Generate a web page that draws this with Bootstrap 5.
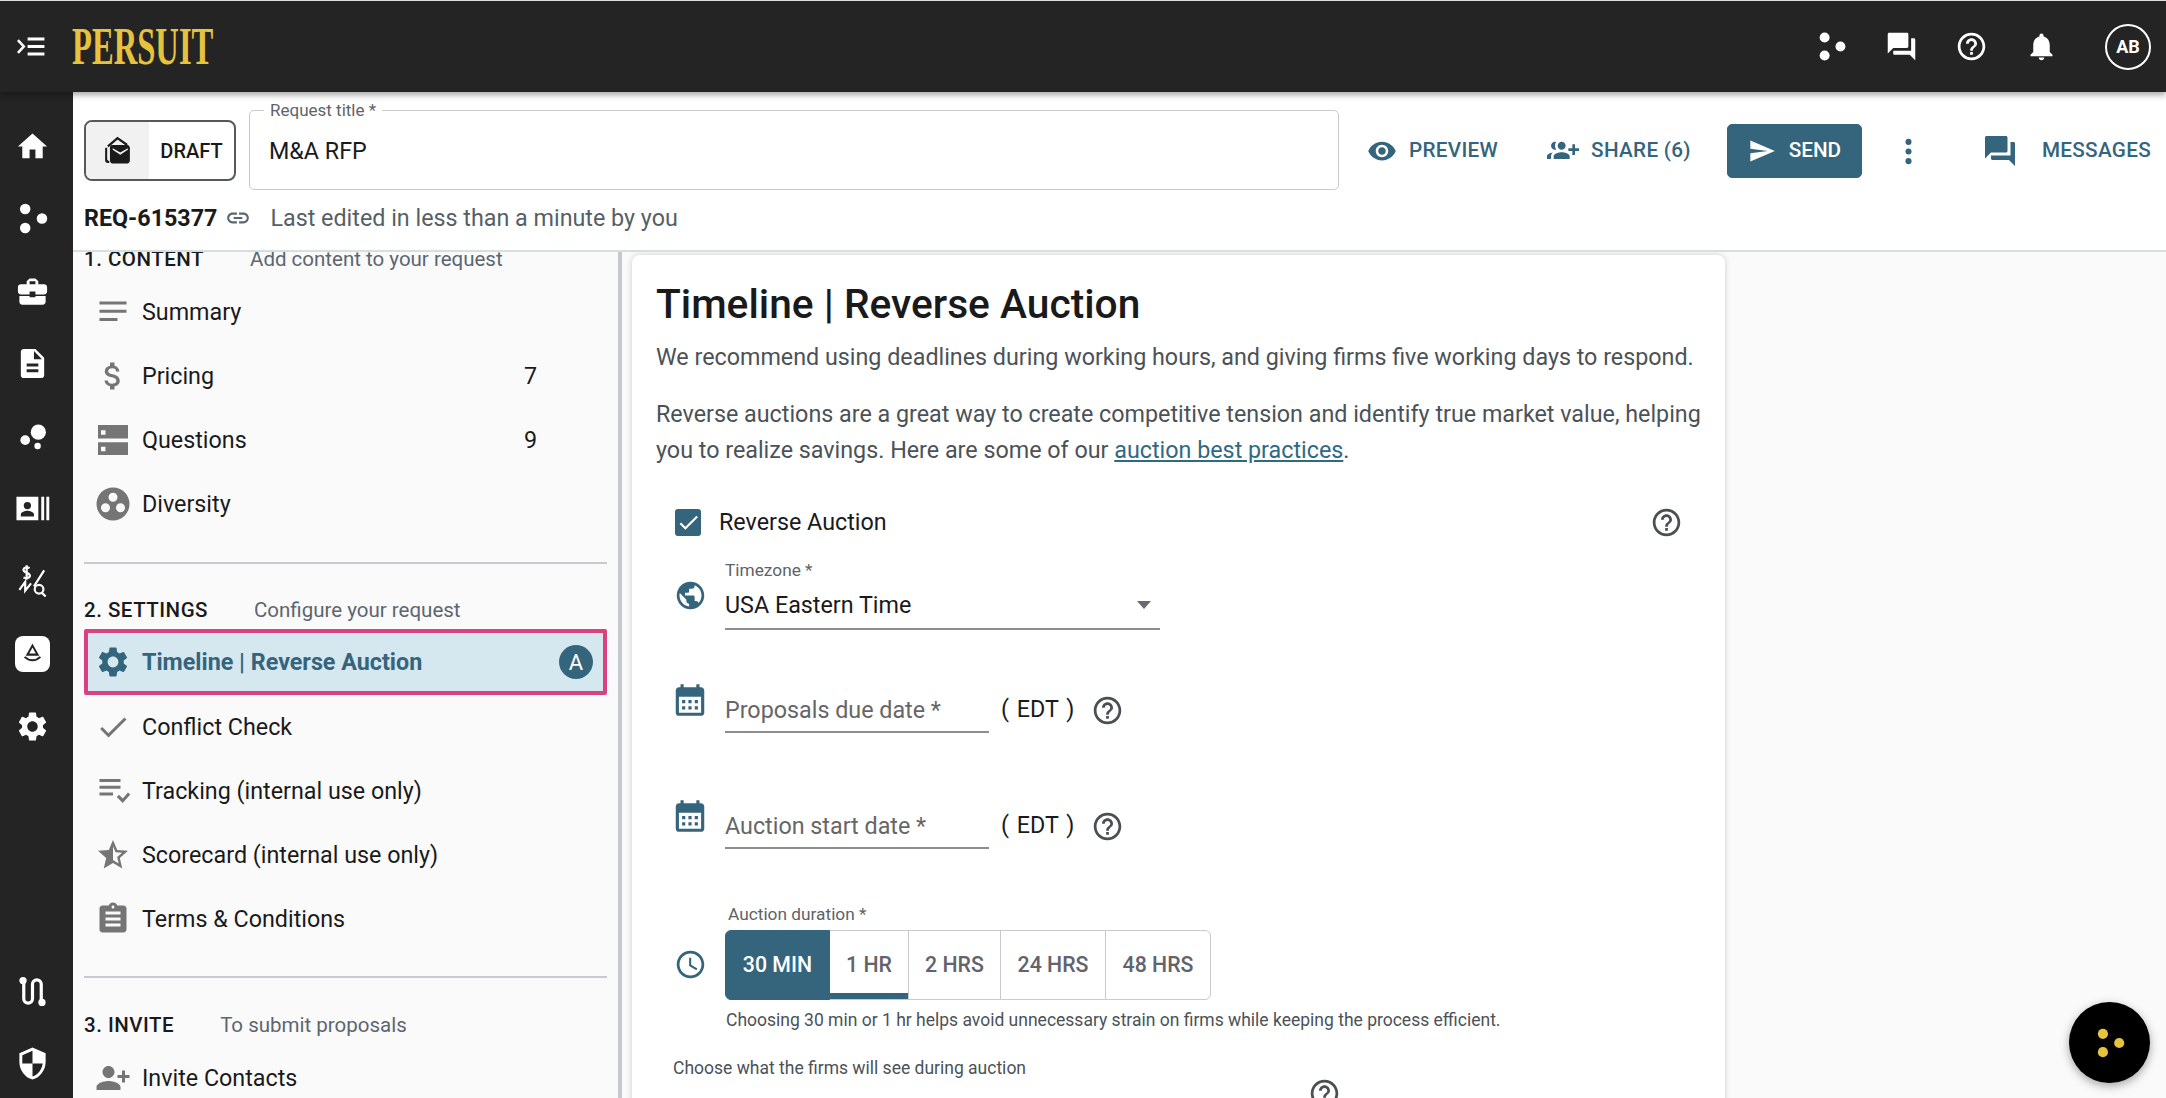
<!DOCTYPE html>
<html lang="en">
<head>
    <meta charset="UTF-8">
    <meta name="viewport" content="width=device-width, initial-scale=1.0">
    <title>Persuit - M&amp;A RFP</title>
    <link href="https://cdn.jsdelivr.net/npm/bootstrap@5.3.0/dist/css/bootstrap.min.css" rel="stylesheet">
    <style>
        body {
            font-family: Roboto, "Liberation Sans", sans-serif;
            font-size: 23.3px;
            color: #1a1a1a;
            background: #fafafa;
        }

        .ico { width: 33px; height: 33px; fill: currentColor; flex: none; }

        /* top bar */
        .top-bar { height: 92px; background: #242424; color: #fff; padding: 0; border-top: 1px solid #ddd; flex: none; position: relative; z-index: 3; box-shadow: 0 3px 6px rgba(0,0,0,.35); }
        .menu-btn { width: 72px; padding-left: 16px; }
        .menu-ico { width: 31px; height: 31px; }
        .logo-text { font-family: "Liberation Serif", serif; font-weight: 700; font-size: 52px; line-height: 1; color: #e5c33f; display: inline-block; transform: scaleX(.627); transform-origin: left center; width: 141px; }
        .top-icons { padding-right: 15px; gap: 37px; }
        .avatar { width: 46px; height: 46px; border: 2px solid #fff; border-radius: 50%; font-size: 18px; font-weight: 700; margin-left: 10px; }

        /* left rail */
        .side-rail { width: 73px; background: #242424; color: #fff; flex: none; padding: 37px 9px 17px 0; gap: 37.4px; }
        .side-rail .ico { width: 35px; height: 35px; }
        .side-rail .rail-tile { width: 35px; height: 36px; background: #fff; color: #242424; border-radius: 8px; }
        .side-rail .rail-tile .ico { width: 27px; height: 27px; }

        /* request header */
        .req-head { height: 160px; background: #fff; border-bottom: 2px solid #d5dfdd; flex: none; padding: 16px 11px 0; }
        .draft-box { width: 152px; height: 61px; border: 2px solid #55595e; border-radius: 8px; overflow: hidden; margin-top: 12px; font-size: 20px; font-weight: 500; }
        .draft-icon { width: 63px; background: #f1f1f1; }
        .title-field { width: 1090px; height: 89px; margin: -7px 0 0 13px; border: 1px solid #c9c9c9; border-radius: 5px; padding: 0 19px; }
        .title-field legend { float: none; width: auto; font-size: 17px; line-height: 18px; color: #5f6368; padding: 0 6px; margin: 0 0 15px -5px; }
        .action-bar { height: 86px; }
        .action-link { color: #34657c; font-size: 20.7px; font-weight: 500; letter-spacing: .3px; gap: 12px; }
        .send-btn { --bs-btn-bg: #34657c; --bs-btn-border-color: #34657c; --bs-btn-hover-bg: #34657c; width: 135px; height: 54px; font-size: 20.7px; font-weight: 500; gap: 13px; border-radius: 5px; padding: 0; }
        .req-meta { margin-top: 11px; line-height: 26px; }
        .req-number { font-weight: 700; font-size: 23.3px; }
        .req-note { color: #555f66; margin-left: 19px; }

        /* content nav */
        .nav-panel { width: 549px; flex: none; border-right: 4px solid #c6c8cd; padding: 0 11px; background: #fafafa; overflow: hidden; }
        .nav-step { font-size: 20.5px; line-height: 24px; display: flex; }
        .nav-step b { font-weight: 500; letter-spacing: .5px; margin-right: 46px; color: #1a1a1a; }
        .nav-step span { color: #5c6670; }
        .nav-step-first { margin-top: -5px; }
        .nav-list { --bs-list-group-bg: transparent; --bs-list-group-border-width: 0; --bs-list-group-item-padding-x: 11px; --bs-list-group-item-padding-y: 0; }
        .nav-list .list-group-item { height: 64px; display: flex; align-items: center; gap: 11px; color: #1a1a1a; }
        .nav-list .ico { width: 36px; height: 36px; color: #757575; }
        .nav-count { margin-left: auto; margin-right: 59px; }
        .nav-list .list-group-item.nav-current { height: 66px; background: #d5e7ef; border: 4px solid #d9427f; border-radius: 2px; color: #34657c; font-weight: 700; padding: 0 10px 0 7px; }
        .nav-list .nav-current .ico { color: #34657c; }
        .letter-badge { width: 34px; height: 34px; border-radius: 50%; background: #34657c; color: #fff; font-size: 22px; font-weight: 400; margin-left: auto; }
        .nav-rule { margin: 0; border-top: 2px solid #c9cad0; opacity: 1; }

        /* timeline card */
        .sheet-area { padding: 3px 0 0 10px; overflow: hidden; }
        .time-sheet { width: 1093px; height: 1000px; border: 0; border-radius: 8px; box-shadow: 0 0 6px rgba(0,0,0,.18); padding: 24px 24px 0; background: #fff; }
        .sheet-title { font-size: 40.7px; font-weight: 500; line-height: 50px; margin: 0 0 10px; color: #1a1a1a; }
        .sheet-text { color: #4b5257; line-height: 36px; margin: 0 0 21px; }
        .sheet-text a { color: #2f6a82; }
        .teal { color: #34657c; }
        .form-line { display: flex; }
        .check-box { width: 26px; height: 27px; background: #34657c; border-radius: 3px; color: #fff; }
        .check-box .ico { width: 25px; height: 25px; }
        .help-ico { color: #4a4f54; width: 33px; height: 33px; }
        .small-label { font-size: 17.3px; line-height: 18px; color: #5f6368; }
        .zone-select { width: 435px; border-bottom: 2px solid #8d8d8d; height: 51px; color: #1a1a1a; padding: 10px 0 6px; }
        .zone-caret { width: 0; height: 0; border: 7px solid transparent; border-top: 8px solid #6a6a72; border-bottom: 0; margin-right: 9px; }
        .date-input { width: 264px; height: 40px; border-bottom: 2px solid #8d8d8d; color: #666; }
        .date-ico { width: 38px; height: 38px; margin: 0 16px 14px -3px; }
        .tz-tag { margin: 0 17px 6px 12px; word-spacing: 2px; }
        .tz-help { margin-bottom: 6px; }
        .duration-group { width: 490px; height: 70px; }
        .duration-group .btn { --bs-btn-border-color: #c9c9ce; --bs-btn-color: #63636b; --bs-btn-hover-color: #63636b; --bs-btn-hover-bg: transparent; --bs-btn-hover-border-color: #c9c9ce; --bs-btn-active-bg: #34657c; --bs-btn-active-border-color: #34657c; --bs-btn-active-color: #fff; font-size: 21.3px; font-weight: 500; padding: 0; border-radius: 0; display: flex; align-items: center; justify-content: center; }
        .duration-group .btn:first-child { border-radius: 6px 0 0 6px; flex: 0 0 105px; }
        .duration-group .btn:last-child { border-radius: 0 6px 6px 0; flex: 0 0 106px; }
        .duration-group .dur-1hr { flex: 0 0 80px; box-shadow: inset 0 -6px 0 #34657c; }
        .duration-group .dur-2hr { flex: 0 0 93px; }
        .duration-group .dur-24 { flex: 0 0 106px; }
        .hint-text { font-size: 17.5px; line-height: 20px; color: #4b5257; }

        /* floating button */
        .float-dots { position: fixed; right: 16px; bottom: 15px; width: 81px; height: 81px; background: #000; border-radius: 50%; box-shadow: 0 3px 10px rgba(0,0,0,.35); color: #e5c33f; z-index: 5; }
        .float-dots .ico { width: 34px; height: 34px; }
    </style>
</head>
<body class="vh-100 overflow-hidden d-flex flex-column">

    <svg width="0" height="0" class="position-absolute">
        <defs>
            <symbol id="i-home" viewBox="0 0 24 24"><path d="M10 20v-6h4v6h5v-8h3L12 3 2 12h3v8z"/></symbol>
            <symbol id="i-dots" viewBox="0 0 24 24"><circle cx="7" cy="5.5" r="3.6"/><circle cx="7" cy="18.5" r="3.6"/><circle cx="18.5" cy="12" r="3.6"/></symbol>
            <symbol id="i-forum" viewBox="0 0 24 24"><path d="M21 6h-2v9H6v2c0 .55.45 1 1 1h11l4 4V7c0-.55-.45-1-1-1zm-4 6V3c0-.55-.45-1-1-1H3c-.55 0-1 .45-1 1v14l4-4h10c.55 0 1-.45 1-1z"/></symbol>
            <symbol id="i-help" viewBox="0 0 24 24"><path d="M11 18h2v-2h-2v2zm1-16C6.48 2 2 6.48 2 12s4.48 10 10 10 10-4.48 10-10S17.52 2 12 2zm0 18c-4.41 0-8-3.59-8-8s3.59-8 8-8 8 3.59 8 8-3.59 8-8 8zm0-14c-2.21 0-4 1.79-4 4h2c0-1.1.9-2 2-2s2 .9 2 2c0 2-3 1.75-3 5h2c0-2.25 3-2.5 3-5 0-2.21-1.79-4-4-4z"/></symbol>
            <symbol id="i-bell" viewBox="0 0 24 24"><path d="M12 22c1.1 0 2-.9 2-2h-4c0 1.1.89 2 2 2zm6-6v-5c0-3.07-1.64-5.64-4.5-6.32V4c0-.83-.67-1.5-1.5-1.5s-1.5.67-1.5 1.5v.68C7.63 5.36 6 7.92 6 11v5l-2 2v1h16v-1l-2-2z"/></symbol>
            <symbol id="i-eye" viewBox="0 0 24 24"><path d="M12 4.5C7 4.5 2.73 7.61 1 12c1.73 4.39 6 7.5 11 7.5s9.27-3.11 11-7.5c-1.73-4.39-6-7.5-11-7.5zM12 17c-2.76 0-5-2.24-5-5s2.24-5 5-5 5 2.24 5 5-2.24 5-5 5zm0-8c-1.66 0-3 1.34-3 3s1.34 3 3 3 3-1.34 3-3-1.34-3-3-3z"/></symbol>
            <symbol id="i-send" viewBox="0 0 24 24"><path d="M2.01 21L23 12 2.01 3 2 10l15 2-15 2z"/></symbol>
            <symbol id="i-more" viewBox="0 0 24 24"><circle cx="12" cy="5" r="2.2"/><circle cx="12" cy="12" r="2.2"/><circle cx="12" cy="19" r="2.2"/></symbol>
            <symbol id="i-group-add" viewBox="0 0 24 24"><g transform="matrix(-1 0 0 1 24 0)"><path d="M8 10H5V7H3v3H0v2h3v3h2v-3h3v-2zm10 1c1.66 0 2.99-1.34 2.99-3S19.66 5 18 5c-.32 0-.63.05-.91.14.57.81.9 1.79.9 2.86s-.34 2.04-.9 2.86c.28.09.59.14.91.14zm-5 0c1.66 0 2.99-1.34 2.99-3S14.66 5 13 5s-3 1.34-3 3 1.34 3 3 3zm6.62 2.16c.83.73 1.38 1.66 1.38 2.84v2h3v-2c0-1.54-2.37-2.49-4.38-2.84zM13 13c-2 0-6 1-6 3v2h12v-2c0-2-4-3-6-3z"/></g></symbol>
            <symbol id="i-person-add" viewBox="0 0 24 24"><g transform="matrix(-1 0 0 1 24 0)"><path d="M15 12c2.21 0 4-1.79 4-4s-1.79-4-4-4-4 1.79-4 4 1.79 4 4 4zm-9-2V7H4v3H1v2h3v3h2v-3h3v-2H6zm9 4c-2.67 0-8 1.34-8 4v2h16v-2c0-2.66-5.33-4-8-4z"/></g></symbol>
            <symbol id="i-lines" viewBox="0 0 24 24"><path d="M3 5h18v2H3zM3 10.500h18v2H3zM3 16h12v2H3z"/></symbol>
            <symbol id="i-money" viewBox="0 0 24 24"><path d="M11.800 10.900c-2.270-.59-3-1.200-3-2.150 0-1.090 1.010-1.850 2.700-1.850 1.780 0 2.440.85 2.500 2.100h2.210c-.07-1.720-1.120-3.300-3.210-3.810V3h-3v2.160c-1.940.42-3.500 1.680-3.500 3.610 0 2.310 1.910 3.460 4.700 4.130 2.500.6 3 1.480 3 2.410 0 .69-.49 1.790-2.700 1.790-2.060 0-2.870-.92-2.980-2.100h-2.200c.12 2.190 1.760 3.420 3.680 3.830V21h3v-2.150c1.950-.37 3.500-1.500 3.500-3.550 0-2.840-2.430-3.810-4.700-4.400z"/></symbol>
            <symbol id="i-storage" viewBox="0 0 24 24"><path d="M2 22h20v-8.500H2V22zm2-5.500h3v3H4v-3zM2 2v9h20V2H2zm5 6.500H4v-3h3v3z"/></symbol>
            <symbol id="i-diversity" viewBox="0 0 24 24"><path fill-rule="evenodd" d="M12 1a11 11 0 1 0 0 22 11 11 0 0 0 0-22zm0 3.500a3 3 0 1 1 0 6 3 3 0 0 1 0-6zM7 11.500a3 3 0 1 1 0 6 3 3 0 0 1 0-6zm10 0a3 3 0 1 1 0 6 3 3 0 0 1 0-6z"/></symbol>
            <symbol id="i-gear" viewBox="0 0 24 24"><path d="M19.140 12.940c.04-.3.06-.61.06-.94 0-.32-.02-.64-.07-.94l2.030-1.580c.18-.14.23-.41.12-.61l-1.920-3.320c-.12-.22-.37-.29-.59-.22l-2.390.96c-.5-.38-1.030-.7-1.620-.94l-.36-2.540c-.04-.24-.24-.41-.48-.41h-3.840c-.24 0-.43.17-.47.41l-.36 2.540c-.59.24-1.130.57-1.620.94l-2.390-.96c-.22-.08-.47 0-.59.22L2.740 8.870c-.12.21-.08.47.12.61l2.030 1.580c-.05.3-.09.63-.09.94s.02.64.07.94l-2.030 1.580c-.18.14-.23.41-.12.61l1.920 3.320c.12.22.37.29.59.22l2.390-.96c.5.38 1.030.7 1.620.94l.36 2.540c.05.24.24.41.48.41h3.840c.24 0 .44-.17.47-.41l.36-2.540c.59-.24 1.130-.56 1.620-.94l2.390.96c.22.08.47 0 .59-.22l1.920-3.320c.12-.22.07-.47-.12-.61l-2.010-1.580zM12 15.600c-1.980 0-3.600-1.620-3.600-3.600s1.620-3.600 3.600-3.600 3.600 1.620 3.600 3.600-1.620 3.600-3.600 3.600z"/></symbol>
            <symbol id="i-check" viewBox="0 0 24 24"><path d="M9 16.170L4.830 12l-1.420 1.410L9 19 21 7l-1.410-1.410z"/></symbol>
            <symbol id="i-track" viewBox="0 0 24 24"><path d="M3 4h14v2H3zM3 8.500h14v2H3zM3 13h9v2H3zM14.500 16l1.500-1.500 2.500 2.500 3.500-4 1.500 1.300-5 5.700z"/></symbol>
            <symbol id="i-star" viewBox="0 0 24 24"><path d="M22 9.240l-7.190-.62L12 2 9.190 8.630 2 9.240l5.460 4.730L5.820 21 12 17.270 18.180 21l-1.630-7.030L22 9.240zM12 15.400V6.100l1.710 4.040 4.380.38-3.320 2.880 1 4.280L12 15.400z"/></symbol>
            <symbol id="i-clip" viewBox="0 0 24 24"><path d="M19 3h-4.180C14.400 1.840 13.300 1 12 1c-1.300 0-2.400.84-2.820 2H5c-1.100 0-2 .9-2 2v14c0 1.100.9 2 2 2h14c1.100 0 2-.9 2-2V5c0-1.100-.9-2-2-2zm-7 0c.55 0 1 .45 1 1s-.45 1-1 1-1-.45-1-1 .45-1 1-1zm5 14H7v-2h10v2zm0-4H7v-2h10v2zm0-4H7V7h10v2z"/></symbol>
            <symbol id="i-brief" viewBox="0 0 24 24"><path d="M10 16v-1H3.010L3 19c0 1.110.89 2 2 2h14c1.110 0 2-.89 2-2v-4h-7v1h-4zm10-9h-4.010V5l-2-2h-4l-2 2v2H4c-1.100 0-2 .9-2 2v3c0 1.110.89 2 2 2h6v-2h4v2h6c1.100 0 2-.9 2-2V9c0-1.100-.9-2-2-2zm-6 0h-4V5h4v2z"/></symbol>
            <symbol id="i-doc" viewBox="0 0 24 24"><path d="M14 2H6c-1.100 0-1.990.9-1.990 2L4 20c0 1.100.89 2 1.990 2H18c1.100 0 2-.9 2-2V8l-6-6zm2 16H8v-2h8v2zm0-4H8v-2h8v2zm-3-5V3.500L18.500 9H13z"/></symbol>
            <symbol id="i-bubble" viewBox="0 0 24 24"><circle cx="7" cy="14.500" r="3.300"/><circle cx="16" cy="9" r="5.200"/><circle cx="15.500" cy="18.500" r="2.200"/></symbol>
            <symbol id="i-contact" viewBox="0 0 24 24"><path fill-rule="evenodd" d="M1 4h15v16H1zM8.500 7.500a2.500 2.500 0 1 0 0 5 2.500 2.500 0 0 0 0-5zM4 17.500h9V16c0-1.700-3-2.500-4.500-2.500S4 14.300 4 16z"/><path d="M18 4h2v16h-2zM21.500 4h2v16h-2z"/></symbol>
            <symbol id="i-rfq" viewBox="0 0 24 24"><g fill="none" stroke="currentColor" stroke-width="1.500"><path d="M10 3.500C8 2.500 5.800 3 5.800 4.600c0 2.600 4.400 1.600 4.400 4.200 0 1.600-2.400 2-4.400 1.100M8 1.500v10M20 5l-7 11"/><path d="M3 18.500l4-5.500v6l4-5"/><circle cx="16.500" cy="18" r="3"/><path d="M18.500 20.500l2.500 2.500"/></g></symbol>
            <symbol id="i-tile" viewBox="0 0 24 24"><g fill="none" stroke="currentColor" stroke-width="1.800"><path d="M12 5l4.500 8h-9z"/><path d="M5 15c4 4 10 4 14 0"/></g></symbol>
            <symbol id="i-route" viewBox="0 0 24 24"><g fill="none" stroke="currentColor" stroke-width="2.200"><path d="M6 5v12a3 3 0 0 0 6 0V7a3 3 0 0 1 6 0v12"/></g><circle cx="5.500" cy="4.500" r="2.500"/><circle cx="18.500" cy="19.500" r="2.500"/></symbol>
            <symbol id="i-shield" viewBox="0 0 24 24"><path d="M12 1L3 5v6c0 5.550 3.840 10.740 9 12 5.160-1.260 9-6.450 9-12V5l-9-4zm0 10.990h7c-.53 4.120-3.280 7.790-7 8.940V12H5V6.300l7-3.110v8.800z"/></symbol>
            <symbol id="i-link" viewBox="0 0 24 24"><path d="M3.900 12c0-1.710 1.390-3.100 3.100-3.100h4V7H7c-2.760 0-5 2.240-5 5s2.240 5 5 5h4v-1.900H7c-1.710 0-3.100-1.390-3.100-3.100zM8 13h8v-2H8v2zm9-6h-4v1.900h4c1.710 0 3.100 1.390 3.100 3.100s-1.390 3.100-3.100 3.100h-4V17h4c2.760 0 5-2.240 5-5s-2.240-5-5-5z"/></symbol>
            <symbol id="i-globe" viewBox="0 0 24 24"><path d="M12 2C6.480 2 2 6.480 2 12s4.480 10 10 10 10-4.480 10-10S17.520 2 12 2zm-1 17.930c-3.950-.49-7-3.850-7-7.930 0-.62.08-1.210.21-1.790L9 15v1c0 1.100.9 2 2 2v1.930zm6.900-2.540c-.26-.81-1-1.390-1.900-1.390h-1v-3c0-.55-.45-1-1-1H8v-2h2c.55 0 1-.45 1-1V7h2c1.100 0 2-.9 2-2v-.41c2.930 1.190 5 4.060 5 7.410 0 2.080-.8 3.970-2.100 5.390z"/></symbol>
            <symbol id="i-cal" viewBox="0 0 24 24"><path d="M19 4h-1V2h-2v2H8V2H6v2H5c-1.110 0-1.990.9-1.990 2L3 20c0 1.100.89 2 2 2h14c1.100 0 2-.9 2-2V6c0-1.100-.9-2-2-2zm0 16H5V10h14v10zM9 14H7v-2h2v2zm4 0h-2v-2h2v2zm4 0h-2v-2h2v2zm-8 4H7v-2h2v2zm4 0h-2v-2h2v2zm4 0h-2v-2h2v2z"/></symbol>
            <symbol id="i-clock" viewBox="0 0 24 24"><path d="M11.990 2C6.470 2 2 6.480 2 12s4.470 10 9.990 10C17.520 22 22 17.520 22 12S17.520 2 11.990 2zM12 20c-4.420 0-8-3.580-8-8s3.580-8 8-8 8 3.580 8 8-3.580 8-8 8zm.5-13H11v6l5.250 3.150.75-1.230-4.500-2.670z"/></symbol>
            <symbol id="i-menu-open" viewBox="0 0 24 24"><path d="M9 5h13v2.400H9zM9 10.800h13v2.400H9zM9 16.600h13v2.400H9z"/><path d="M1.500 7l4.500 5-4.500 5" fill="none" stroke="currentColor" stroke-width="2"/></symbol>
            <symbol id="i-draft" viewBox="0 0 24 24"><path d="M5 9l7-6 7 5" fill="none" stroke="currentColor" stroke-width="1.600"/><path d="M3 10v9c0 1 .6 2 2 2h1v-1.500c-1 0-1.500-.5-1.500-1.500v-8z"/><path fill-rule="evenodd" d="M8 8h11c1 0 2 1 2 2v9c0 1.500-1 2.500-2.500 2.500H9c-1.500 0-2.500-1-2.500-2.500v-9C6.500 9 7 8 8 8zm.5 3.500l5.500 3.500 5.500-3.500v-1.200l-5.500 3.200-5.500-3.200z"/></symbol>
        </defs>
    </svg>

    <!-- Top bar -->
    <nav class="navbar top-bar">
        <div class="d-flex align-items-center w-100">
            <div class="menu-btn d-flex align-items-center"><svg class="ico menu-ico"><use href="#i-menu-open"/></svg></div>
            <span class="logo-text">PERSUIT</span>
            <div class="top-icons d-flex align-items-center ms-auto">
                <svg class="ico"><use href="#i-dots"/></svg>
                <svg class="ico"><use href="#i-forum"/></svg>
                <svg class="ico"><use href="#i-help"/></svg>
                <svg class="ico"><use href="#i-bell"/></svg>
                <div class="avatar d-flex align-items-center justify-content-center">AB</div>
            </div>
        </div>
    </nav>

    <div class="d-flex flex-grow-1 overflow-hidden">
        <!-- Left rail -->
        <aside class="side-rail d-flex flex-column align-items-center">
            <svg class="ico"><use href="#i-home"/></svg>
            <svg class="ico"><use href="#i-dots"/></svg>
            <svg class="ico"><use href="#i-brief"/></svg>
            <svg class="ico"><use href="#i-doc"/></svg>
            <svg class="ico"><use href="#i-bubble"/></svg>
            <svg class="ico"><use href="#i-contact"/></svg>
            <svg class="ico"><use href="#i-rfq"/></svg>
            <div class="rail-tile d-flex align-items-center justify-content-center"><svg class="ico"><use href="#i-tile"/></svg></div>
            <svg class="ico"><use href="#i-gear"/></svg>
            <svg class="ico mt-auto"><use href="#i-route"/></svg>
            <svg class="ico"><use href="#i-shield"/></svg>
        </aside>

        <div class="flex-grow-1 d-flex flex-column overflow-hidden">
            <!-- Request header -->
            <header class="req-head">
                <div class="d-flex align-items-start">
                    <div class="draft-box d-flex">
                        <div class="draft-icon d-flex align-items-center justify-content-center"><svg class="ico"><use href="#i-draft"/></svg></div>
                        <div class="flex-grow-1 d-flex align-items-center justify-content-center">DRAFT</div>
                    </div>
                    <fieldset class="title-field">
                        <legend>Request title *</legend>
                        <div>M&amp;A RFP</div>
                    </fieldset>
                    <div class="action-bar d-flex align-items-center ms-auto">
                        <a class="action-link d-flex align-items-center text-decoration-none" style="margin-right:49px" href="#"><svg class="ico" style="width:30px;height:30px"><use href="#i-eye"/></svg>PREVIEW</a>
                        <a class="action-link d-flex align-items-center text-decoration-none" style="margin-right:36px" href="#"><svg class="ico" style="width:32px;height:32px"><use href="#i-group-add"/></svg>SHARE (6)</a>
                        <button class="btn btn-primary send-btn d-flex align-items-center justify-content-center" type="button"><svg class="ico" style="width:28px;height:28px"><use href="#i-send"/></svg>SEND</button>
                        <svg class="ico teal" style="margin:0 57px 0 30px"><use href="#i-more"/></svg>
                        <a class="action-link d-flex align-items-center text-decoration-none" style="gap:24px;margin-right:4px" href="#"><svg class="ico" style="width:36px;height:36px"><use href="#i-forum"/></svg>MESSAGES</a>
                    </div>
                </div>
                <div class="req-meta d-flex align-items-center">
                    <span class="req-number">REQ-615377</span>
                    <svg class="ico ms-2" style="width:26px;height:26px;color:#5c6670"><use href="#i-link"/></svg>
                    <span class="req-note">Last edited in less than a minute by you</span>
                </div>
            </header>

            <div class="d-flex flex-grow-1 overflow-hidden">
                <!-- Request sections -->
                <div class="nav-panel">
                    <div class="nav-step nav-step-first"><b>1. CONTENT</b><span>Add content to your request</span></div>
                    <div class="list-group nav-list" style="margin-top:9px">
                        <a class="list-group-item"><svg class="ico"><use href="#i-lines"/></svg>Summary</a>
                        <a class="list-group-item"><svg class="ico"><use href="#i-money"/></svg>Pricing<span class="nav-count">7</span></a>
                        <a class="list-group-item"><svg class="ico"><use href="#i-storage"/></svg>Questions<span class="nav-count">9</span></a>
                        <a class="list-group-item"><svg class="ico"><use href="#i-diversity"/></svg>Diversity</a>
                    </div>
                    <hr class="nav-rule" style="margin-top:26px">
                    <div class="nav-step" style="margin-top:34px"><b>2. SETTINGS</b><span>Configure your request</span></div>
                    <div class="list-group nav-list" style="margin-top:7px">
                        <a class="list-group-item nav-current"><svg class="ico"><use href="#i-gear"/></svg>Timeline | Reverse Auction<span class="letter-badge d-flex align-items-center justify-content-center">A</span></a>
                        <a class="list-group-item"><svg class="ico"><use href="#i-check"/></svg>Conflict Check</a>
                        <a class="list-group-item"><svg class="ico"><use href="#i-track"/></svg>Tracking (internal use only)</a>
                        <a class="list-group-item"><svg class="ico"><use href="#i-star"/></svg>Scorecard (internal use only)</a>
                        <a class="list-group-item"><svg class="ico"><use href="#i-clip"/></svg>Terms &amp; Conditions</a>
                    </div>
                    <hr class="nav-rule" style="margin-top:25px">
                    <div class="nav-step" style="margin-top:35px"><b>3. INVITE</b><span>To submit proposals</span></div>
                    <div class="list-group nav-list" style="margin-top:9px">
                        <a class="list-group-item"><svg class="ico"><use href="#i-person-add"/></svg>Invite Contacts</a>
                    </div>
                </div>

                <!-- Timeline card -->
                <main class="sheet-area flex-grow-1">
                    <div class="card time-sheet">
                        <h1 class="sheet-title">Timeline | Reverse Auction</h1>
                        <p class="sheet-text">We recommend using deadlines during working hours, and giving firms five working days to respond.</p>
                        <p class="sheet-text">Reverse auctions are a great way to create competitive tension and identify true market value, helping<br>you to realize savings. Here are some of our <a href="#">auction best practices</a>.</p>

                        <div class="form-line align-items-center" style="margin:16px 0 0 19px">
                            <div class="check-box d-flex align-items-center justify-content-center"><svg class="ico"><use href="#i-check"/></svg></div>
                            <span style="margin-left:18px">Reverse Auction</span>
                            <svg class="ico help-ico ms-auto" style="margin-right:18px"><use href="#i-help"/></svg>
                        </div>

                        <div class="form-line align-items-center" style="margin:21px 0 0 18px">
                            <svg class="ico teal" style="margin-right:18px"><use href="#i-globe"/></svg>
                            <div>
                                <div class="small-label">Timezone *</div>
                                <div class="zone-select d-flex align-items-center justify-content-between">USA Eastern Time<span class="zone-caret"></span></div>
                            </div>
                        </div>

                        <div class="form-line align-items-end" style="margin:51px 0 0 18px">
                            <svg class="ico teal date-ico"><use href="#i-cal"/></svg>
                            <div class="date-input">Proposals due date *</div>
                            <span class="tz-tag">( EDT )</span>
                            <svg class="ico help-ico tz-help"><use href="#i-help"/></svg>
                        </div>

                        <div class="form-line align-items-end" style="margin:64px 0 0 18px">
                            <svg class="ico teal date-ico"><use href="#i-cal"/></svg>
                            <div class="date-input">Auction start date *</div>
                            <span class="tz-tag">( EDT )</span>
                            <svg class="ico help-ico tz-help"><use href="#i-help"/></svg>
                        </div>

                        <div class="small-label" style="margin:56px 0 7px 72px">Auction duration *</div>
                        <div class="form-line align-items-center" style="margin-left:18px">
                            <svg class="ico teal" style="margin-right:18px"><use href="#i-clock"/></svg>
                            <div class="btn-group duration-group" role="group">
                                <button class="btn btn-outline-secondary active" type="button">30 MIN</button>
                                <button class="btn btn-outline-secondary dur-1hr" type="button">1 HR</button>
                                <button class="btn btn-outline-secondary dur-2hr" type="button">2 HRS</button>
                                <button class="btn btn-outline-secondary dur-24" type="button">24 HRS</button>
                                <button class="btn btn-outline-secondary" type="button">48 HRS</button>
                            </div>
                        </div>
                        <div class="hint-text" style="margin:10px 0 0 70px">Choosing 30 min or 1 hr helps avoid unnecessary strain on firms while keeping the process efficient.</div>
                        <div class="hint-text" style="margin:28px 0 0 17px">Choose what the firms will see during auction</div>
                        <svg class="ico help-ico" style="margin:-1px 0 0 652px"><use href="#i-help"/></svg>
                    </div>
                </main>
            </div>
        </div>
    </div>

    <div class="float-dots d-flex align-items-center justify-content-center"><svg class="ico"><use href="#i-dots"/></svg></div>

    <script src="https://cdn.jsdelivr.net/npm/bootstrap@5.3.0/dist/js/bootstrap.bundle.min.js"></script>
</body>
</html>
